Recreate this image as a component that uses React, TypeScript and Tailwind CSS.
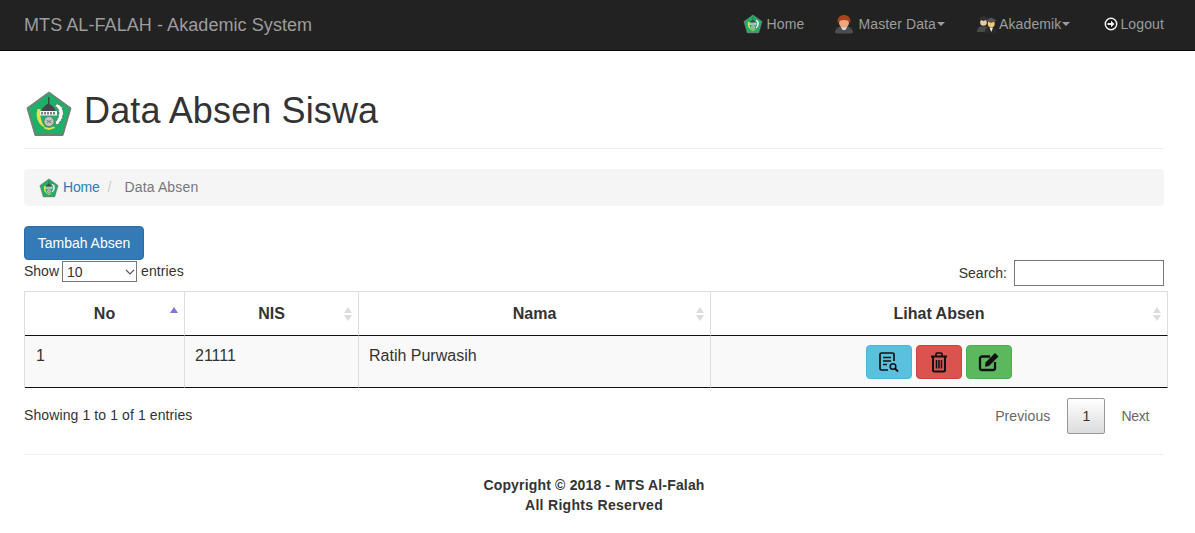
import React from "react";

function Logo({ size }: { size: number }) {
  return (
    <svg width={size} height={size} viewBox="0 0 48 48" className="shrink-0">
      <polygon points="24,2 46,18 38,45.500 10,45.500 2,18" fill="#6f7f74" stroke="#6f7f74" strokeWidth="1" strokeLinejoin="round" />
      <polygon points="24,3.500 44.500,18.500 37,44 11,44 3.500,18.500" fill="#1eb069" />
      <path d="M12.500 19c-2.500 8 .5 15.500 8.500 19.500-4.500-5.500-6.500-12-5.500-19.500z" fill="#e3e24c" />
      <path d="M32 13.500l5 3.500 1.500 6-1.500 6-4.500 6-2.500-2 3-5 1-5-1-4.500-3-2.500z" fill="#f7f7f7" stroke="#444" strokeWidth="0.6" strokeDasharray="2.500 1" />
      <path d="M16.500 21c.5-4 5-6.500 7-7.500 2 1 6.500 3.500 7 7.500z" fill="#43474a" />
      <rect x="23.200" y="7" width="1.200" height="7" fill="#3a3a3a" />
      <rect x="15" y="21" width="17" height="4.500" fill="#f5f5f5" />
      <path d="M17 22v2.500M20 22v2.500M23 22v2.500M26 22v2.500M29 22v2.500" stroke="#333" strokeWidth="1.200" />
      <circle cx="24" cy="31.500" r="5" fill="#c3c8c4" stroke="#666" strokeWidth="0.7" />
      <path d="M21.500 30l5 3M26.500 30l-5 3" stroke="#666" strokeWidth="0.8" />
      <path d="M19 38.500l5 1.500 6-2-1-1.500-5 1.500-4-1z" fill="#e3e24c" />
    </svg>
  );
}

function Person() {
  return (
    <svg width="20" height="20" viewBox="0 0 20 20" className="shrink-0">
      <path d="M1 18.500c0-3.500 2.500-5.500 5.500-6h7c3 .5 5.500 2.500 5.500 6 0 .5-1 1-2 1H3c-1 0-2-.5-2-1z" fill="#4a4e52" />
      <path d="M6.500 12.500h7l-2 3.500h-3z" fill="#cfd6de" />
      <ellipse cx="10" cy="9" rx="5" ry="4.500" fill="#eda77d" />
      <path d="M3.500 9.500C2.800 3.500 6.500 1 10.300 1c3.700 0 6.900 2.800 6.200 8.500-1-2.500-2.800-3.500-6.500-3.500s-5.500 1-6.500 3.500z" fill="#a8431b" />
    </svg>
  );
}

function Grads() {
  return (
    <svg width="20" height="20" viewBox="0 0 20 20" className="shrink-0">
      <path d="M0 18c0-3.500 1.500-5.500 4-5.500h5c2 0 3 2 3 5.500z" fill="#4a4a4a" />
      <circle cx="6.500" cy="8.500" r="3.300" fill="#e9c9a4" />
      <path d="M.5 4.500L6.500 1.500 12 4.500 6.500 7z" fill="#2f2f2f" />
      <path d="M7.500 19.500c0-4 2-6 4.500-6h4c2.500 0 4 2 4 6z" fill="#2a2a2a" />
      <path d="M12.500 13.500h3.500L14.300 18z" fill="#f7f3e0" />
      <circle cx="14.200" cy="9.800" r="3.500" fill="#f2c777" />
      <path d="M8.500 6.500l5.700-3 5.500 3-5.500 2.500z" fill="#555" />
    </svg>
  );
}

function LogoutIcon() {
  return (
    <svg width="14" height="14" viewBox="0 0 14 14" className="shrink-0">
      <circle cx="7" cy="7" r="5.700" fill="#1a1a1a" stroke="#f2f2f2" strokeWidth="1.500" />
      <path d="M3.500 6h3.500V3.800L10.500 7 7 10.200V8H3.500z" fill="#f2f2f2" />
    </svg>
  );
}

function Caret() {
  return <span className="ml-[1px] inline-block w-0 h-0 border-x-[4px] border-x-transparent border-t-[4px] border-t-[#9d9d9d]" />;
}

function NavItem({ icon, label, caret, gap }: { icon: React.ReactNode; label: string; caret?: boolean; gap: string }) {
  return (
    <a className={"flex items-center text-[14px] text-[#9d9d9d] tracking-[0.12px] " + gap}>
      {icon}
      <span className="flex items-center">
        {label}
        {caret && <Caret />}
      </span>
    </a>
  );
}

function Sort({ active }: { active?: boolean }) {
  if (active) {
    return (
      <svg width="10" height="16" viewBox="0 0 10 16" className="absolute right-[5px] top-[13px]">
        <polygon points="5,2 9,8 1,8" fill="#7c78d8" />
      </svg>
    );
  }
  return (
    <svg width="10" height="16" viewBox="0 0 10 16" className="absolute right-[5px] top-[14px]">
      <polygon points="5,1 9,7 1,7" fill="#dcdcdc" />
      <polygon points="5,15 9,9 1,9" fill="#dcdcdc" />
    </svg>
  );
}

function Th({ label, active, w }: { label: string; active?: boolean; w: string }) {
  return (
    <th className={"relative h-[44px] border-r border-[#ddd] text-center text-[16px] font-bold text-[#333] p-0 " + w}>
      {label}
      <Sort active={active} />
    </th>
  );
}

function Action({ bg, border, children }: { bg: string; border: string; children: React.ReactNode }) {
  return <span className={"flex items-center justify-center w-[46px] h-[34px] rounded-[4px] border " + bg + " " + border}>{children}</span>;
}

export default function App() {
  return (
    <div className="min-h-[533px] bg-white text-[14px] text-[#333] font-['Liberation_Sans',Arial,sans-serif]">
      <nav className="h-[51px] bg-[#222] border-b border-[#080808] flex items-center pl-6 pr-[31px] justify-between">
        <span className="text-[18px] text-[#9d9d9d] tracking-[0.07px]">MTS AL-FALAH - Akademic System</span>
        <div className="flex items-center -mt-[2px]">
          <NavItem icon={<Logo size={20} />} label="Home" gap="gap-[4px]" />
          <div className="w-[30px]" />
          <NavItem icon={<Person />} label="Master Data" caret gap="gap-[4px]" />
          <div className="w-[32px]" />
          <NavItem icon={<Grads />} label="Akademik" caret gap="gap-[2px]" />
          <div className="w-[34px]" />
          <NavItem icon={<LogoutIcon />} label="Logout" gap="gap-[2px]" />
        </div>
      </nav>

      <main className="w-[1140px] ml-6">
        <div className="mt-[39px] h-[59px] pb-[11px] border-b border-[#eee] flex items-start">
          <span className="ml-[1px]"><Logo size={48} /></span>
          <h1 className="ml-[11px] text-[36px] leading-[42px] font-normal text-[#333] tracking-[0.13px]">Data Absen Siswa</h1>
        </div>

        <div className="mt-[20px] h-[37px] rounded-[4px] bg-[#f5f5f5] flex items-center pl-[15px]">
          <Logo size={20} />
          <a className="ml-[4px] text-[#337ab7] -tracking-[0.2px]">Home</a>
          <span className="ml-[8px] text-[#ccc]">/</span>
          <span className="ml-[13px] text-[#777] tracking-[0.15px]">Data Absen</span>
        </div>

        <button className="mt-[20px] block h-[34px] w-[120px] rounded-[4px] bg-[#337ab7] border border-[#2e6da4] text-white text-[14px]">
          Tambah Absen
        </button>

        <div className="flex items-start justify-between">
          <div className="flex items-center h-[22px]">
            <span>Show</span>
            <span className="relative ml-[3px] flex">
              <select className="appearance-none w-[75px] h-[21px] border border-[#767676] rounded-none bg-white text-[14px] text-[#333] pl-[4px]" defaultValue="10">
                <option>10</option>
              </select>
              <svg width="10" height="6" viewBox="0 0 10 6" className="absolute right-[2px] top-[8px]" fill="none" stroke="#555" strokeWidth="1.100">
                <path d="M1 1l4 4 4-4" />
              </svg>
            </span>
            <span className="ml-[4px] tracking-[0.1px]">entries</span>
          </div>
          <div className="flex items-center h-[26px]">
            <span>Search:</span>
            <input className="ml-[7px] w-[150px] h-[26px] border border-[#767676] bg-white" />
          </div>
        </div>

        <table className="mt-[5px] w-[1144px] table-fixed border-separate border-spacing-0 border-t border-l border-[#ddd]">
          <thead>
            <tr>
              <Th label="No" active w="w-[160px] border-b border-b-[#111]" />
              <Th label="NIS" w="w-[174px] border-b border-b-[#111]" />
              <Th label="Nama" w="w-[352px] border-b border-b-[#111]" />
              <Th label="Lihat Absen" w="w-[457px] border-b border-b-[#111]" />
            </tr>
          </thead>
          <tbody>
            <tr className="bg-[#f9f9f9] text-[16px] leading-[20px] text-[#333]">
              <td className="h-[52px] align-top pt-[10px] pl-[11px] border-r border-b border-[#ddd] border-b-[#111]">1</td>
              <td className="align-top pt-[10px] pl-[10px] border-r border-b border-[#ddd] border-b-[#111]">21111</td>
              <td className="align-top pt-[10px] pl-[10px] border-r border-b border-[#ddd] border-b-[#111]">Ratih Purwasih</td>
              <td className="align-top pt-[9px] border-r border-b border-[#ddd] border-b-[#111]">
                <div className="flex justify-center gap-[4px]">
                  <Action bg="bg-[#5bc0de]" border="border-[#46b8da]">
                    <svg width="22" height="22" viewBox="0 0 22 22" fill="none" stroke="#111" strokeWidth="1.700">
                      <path d="M16 10V3.500A1.500 1.500 0 0 0 14.500 2h-11A1.500 1.500 0 0 0 2 3.500v14A1.500 1.500 0 0 0 3.500 19H10" />
                      <path d="M5 6.500h8M5 10h8M5 13.500h4" />
                      <circle cx="15" cy="15.500" r="2.800" strokeWidth="1.500" />
                      <path d="M17 17.500l3 3" strokeWidth="2" />
                    </svg>
                  </Action>
                  <Action bg="bg-[#d9534f]" border="border-[#d43f3a]">
                    <svg width="20" height="22" viewBox="0 0 20 22" fill="none" stroke="#111">
                      <path d="M2 5.500h16" strokeWidth="2" />
                      <path d="M7 5V3a1 1 0 0 1 1-1h4a1 1 0 0 1 1 1v2" strokeWidth="1.600" />
                      <path d="M4 6v13a1.500 1.500 0 0 0 1.500 1.500h9A1.500 1.500 0 0 0 16 19V6" strokeWidth="2" />
                      <path d="M7.500 9v8.500M10 9v8.500M12.500 9v8.500" strokeWidth="1.500" />
                    </svg>
                  </Action>
                  <Action bg="bg-[#5cb85c]" border="border-[#4cae4c]">
                    <svg width="22" height="22" viewBox="0 0 22 22" fill="none">
                      <path d="M17 11v6a2 2 0 0 1-2 2H4a2 2 0 0 1-2-2V7.500a2 2 0 0 1 2-2h8" stroke="#111" strokeWidth="2.300" />
                      <path d="M7.500 11.500L17 2l3.500 3.500L11 15l-4 .8z" fill="#111" />
                    </svg>
                  </Action>
                </div>
              </td>
            </tr>
          </tbody>
        </table>

        <div className="flex items-start justify-between mt-[10px]">
          <span className="mt-[7px] leading-[20px] tracking-[0.1px]">Showing 1 to 1 of 1 entries</span>
          <div className="flex items-center h-[36px] text-[#666]">
            <span className="tracking-[0.1px]">Previous</span>
            <span className="ml-[17px] w-[38px] h-[36px] flex items-center justify-center rounded-[2px] border border-[#979797] bg-gradient-to-b from-white to-[#dcdcdc] text-[#333]">1</span>
            <span className="ml-[16px] mr-[15px] -tracking-[0.3px]">Next</span>
          </div>
        </div>

        <div className="mt-[20px] border-t border-[#eee] pt-[20px] text-center font-bold leading-[20px] text-[#333]">
          <div className="tracking-[0.17px]">Copyright © 2018 - MTS Al-Falah</div>
          <div className="tracking-[0.3px]">All Rights Reserved</div>
        </div>
      </main>
    </div>
  );
}
